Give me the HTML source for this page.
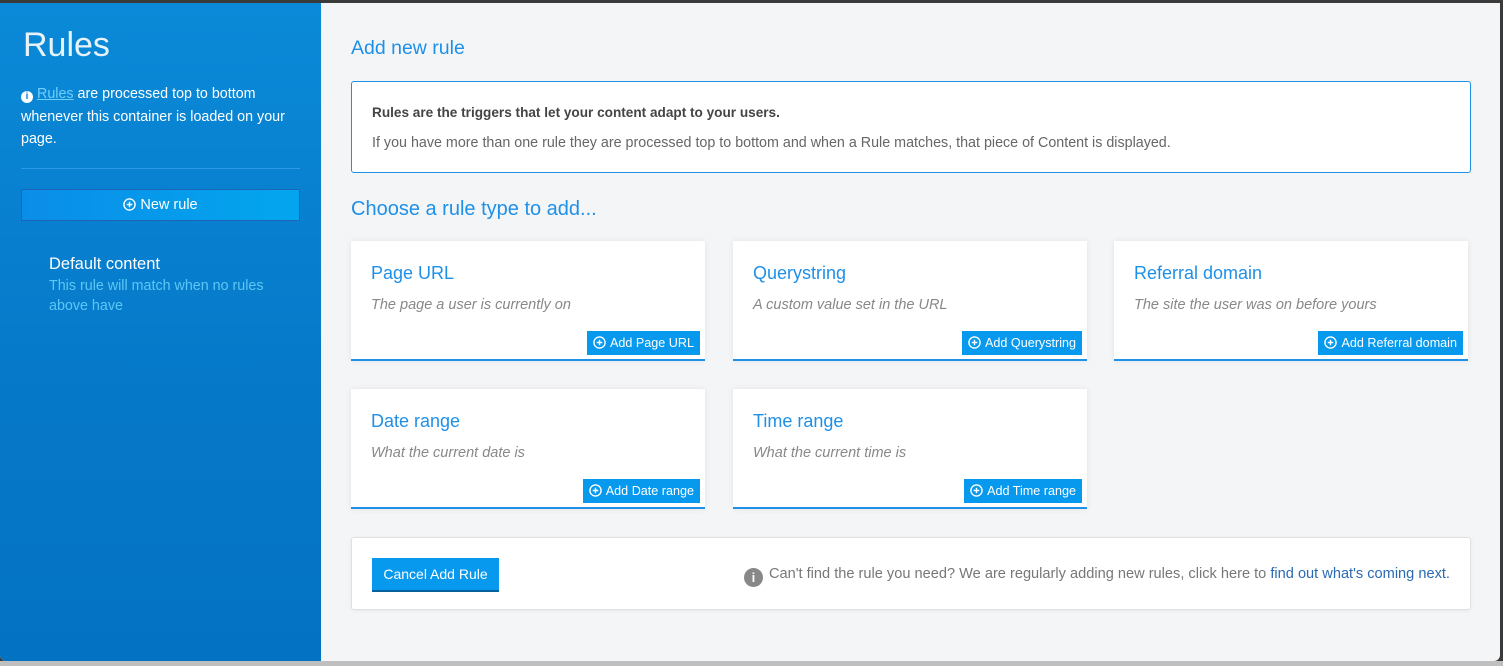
<!DOCTYPE html>
<html><head><meta charset="utf-8"><style>
*{box-sizing:border-box;margin:0;padding:0}
body{width:1503px;height:666px;overflow:hidden;background:#3a3a3a;font-family:"Liberation Sans",sans-serif;position:relative}
.frame{position:absolute;left:0;top:3px;width:1500px;height:658px;background:#f4f5f7;border-radius:0 0 6px 6px;overflow:hidden}
.bot{position:absolute;left:0;top:661px;width:1503px;height:5px;background:#bfbfbf}
.side{position:absolute;left:0;top:0;width:321px;height:658px;background:linear-gradient(180deg,#0a8ad8 0%,#0678c8 60%,#0472c2 100%);color:#fff}
.side h1{position:absolute;left:23px;top:23px;font-weight:normal;font-size:34px;color:rgba(255,255,255,.9)}
.side .info{position:absolute;left:21px;top:80px;width:290px;font-size:14.3px;line-height:22.5px}
.side .info a{color:#6fd0ff;text-decoration:underline}
.ic{display:inline-block;width:12px;height:12px;border-radius:50%;background:#fff;color:#0a86d5;font-size:10px;line-height:12px;text-align:center;font-weight:bold;vertical-align:-1px;margin-right:4px}
.hr{position:absolute;left:21px;top:165px;width:279px;height:1px;background:#2d9ae6}
.nr{position:absolute;left:21px;top:186px;width:279px;height:32px;background:linear-gradient(90deg,#0a8de8,#03a6ee);border:1px solid #1f64b8;color:#fff;font-size:14.5px;text-align:center;line-height:30px}
svg.p{width:13px;height:13px;vertical-align:-2px;margin-right:4px}
.dc{position:absolute;left:49px;top:252px;font-size:16.5px}
.dc2{position:absolute;left:49px;top:273px;font-size:14.3px;color:#5cc8f7;line-height:20px;width:240px}
.t1{position:absolute;left:351px;top:34px;font-size:19.5px;color:#1e90e8}
.box{position:absolute;left:351px;top:78px;width:1120px;height:92px;border:1px solid #1e90e8;border-radius:3px;background:#fff;font-size:14.3px;color:#666}
.box b{position:absolute;left:20px;top:23px;color:#444;font-weight:bold;font-size:13.6px}
.box span{position:absolute;left:20px;top:53px}
.t2{position:absolute;left:351px;top:195px;font-size:20px;color:#1e90e8}
.card{position:absolute;width:354px;height:120px;background:#fff;border-bottom:2px solid #1e90e8;box-shadow:0 0 6px rgba(0,0,0,.08)}
.card h3{position:absolute;left:20px;top:22px;font-weight:normal;font-size:18px;color:#1e90e8}
.card p{position:absolute;left:20px;top:56px;font-style:italic;font-size:14.5px;color:#888}
.card .b{position:absolute;right:5px;top:90px;height:24px;background:#0799ee;color:#fff;font-size:12.6px;line-height:24px;padding:0 6px 0 6px}
.foot{position:absolute;left:351px;top:534px;width:1120px;height:73px;background:#fff;border-radius:3px;border:1px solid #e0e0e0;box-shadow:0 1px 4px rgba(0,0,0,.06)}
.cb{position:absolute;left:20px;top:20px;width:127px;height:34px;background:#0799ee;border-bottom:2px solid #06609e;color:#fff;font-size:14px;line-height:32px;text-align:center}
.ft{position:absolute;right:20px;top:28px;font-size:14.6px;color:#777;white-space:nowrap}
.ft a{color:#2a6ab0;text-decoration:none}
.gi{display:inline-block;width:19px;height:19px;border-radius:50%;background:#888;color:#fff;font-size:13px;line-height:19px;text-align:center;font-weight:bold;vertical-align:-4px;margin-right:6px}
</style></head><body>
<div class="frame">
<div class="side">
<h1>Rules</h1>
<div class="info"><span class="ic">i</span><a>Rules</a> are processed top to bottom whenever this container is loaded on your page.</div>
<div class="hr"></div>
<div class="nr"><svg class="p" viewBox="0 0 14 14"><circle cx="7" cy="7" r="6" fill="none" stroke="#fff" stroke-width="1.5"/><path d="M7 4v6M4 7h6" stroke="#fff" stroke-width="1.5"/></svg>New rule</div>
<div class="dc">Default content</div>
<div class="dc2">This rule will match when no rules above have</div>
</div>
<div class="t1">Add new rule</div>
<div class="box"><b>Rules are the triggers that let your content adapt to your users.</b><span>If you have more than one rule they are processed top to bottom and when a Rule matches, that piece of Content is displayed.</span></div>
<div class="t2">Choose a rule type to add...</div>
<div class="card" style="left:351px;top:238px"><h3>Page URL</h3><p>The page a user is currently on</p><div class="b"><svg class="p" viewBox="0 0 14 14"><circle cx="7" cy="7" r="6" fill="none" stroke="#fff" stroke-width="1.5"/><path d="M7 4v6M4 7h6" stroke="#fff" stroke-width="1.5"/></svg>Add Page URL</div></div>
<div class="card" style="left:733px;top:238px"><h3>Querystring</h3><p>A custom value set in the URL</p><div class="b"><svg class="p" viewBox="0 0 14 14"><circle cx="7" cy="7" r="6" fill="none" stroke="#fff" stroke-width="1.5"/><path d="M7 4v6M4 7h6" stroke="#fff" stroke-width="1.5"/></svg>Add Querystring</div></div>
<div class="card" style="left:1114px;top:238px"><h3>Referral domain</h3><p>The site the user was on before yours</p><div class="b"><svg class="p" viewBox="0 0 14 14"><circle cx="7" cy="7" r="6" fill="none" stroke="#fff" stroke-width="1.5"/><path d="M7 4v6M4 7h6" stroke="#fff" stroke-width="1.5"/></svg>Add Referral domain</div></div>
<div class="card" style="left:351px;top:386px"><h3>Date range</h3><p>What the current date is</p><div class="b"><svg class="p" viewBox="0 0 14 14"><circle cx="7" cy="7" r="6" fill="none" stroke="#fff" stroke-width="1.5"/><path d="M7 4v6M4 7h6" stroke="#fff" stroke-width="1.5"/></svg>Add Date range</div></div>
<div class="card" style="left:733px;top:386px"><h3>Time range</h3><p>What the current time is</p><div class="b"><svg class="p" viewBox="0 0 14 14"><circle cx="7" cy="7" r="6" fill="none" stroke="#fff" stroke-width="1.5"/><path d="M7 4v6M4 7h6" stroke="#fff" stroke-width="1.5"/></svg>Add Time range</div></div>
<div class="foot"><div class="cb">Cancel Add Rule</div><div class="ft"><span class="gi">i</span>Can't find the rule you need? We are regularly adding new rules, click here to <a>find out what's coming next.</a></div></div>
</div>
<div class="bot"></div>
</body></html>
